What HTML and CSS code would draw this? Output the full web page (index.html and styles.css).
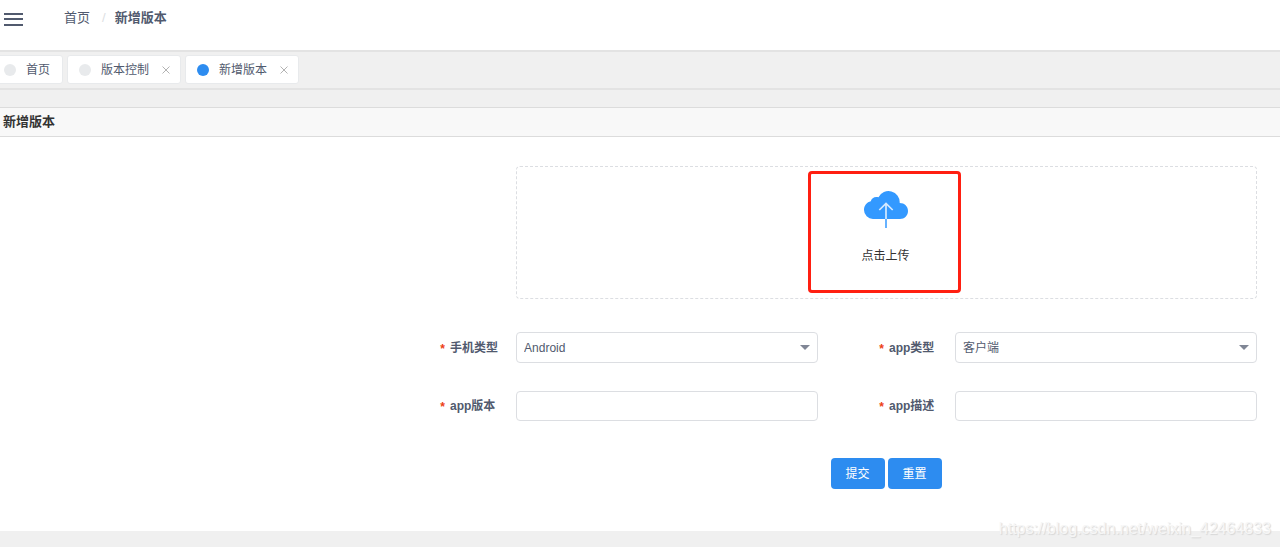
FILE: index.html
```html
<!DOCTYPE html>
<html lang="zh-CN">
<head>
<meta charset="utf-8">
<title>新增版本</title>
<link rel="stylesheet" href="styles.css">
</head>
<body>
<header class="topbar">
  <button class="menu-toggle" type="button" aria-label="菜单">
    <svg width="19" height="13" viewBox="0 0 19 13" shape-rendering="crispEdges"><path d="M0 0h19v2H0zM0 5h19v2H0zM0 11h19v2H0z" fill="#515a6e"/></svg>
  </button>
  <nav class="breadcrumb">
    <a href="#">首页</a><span class="slash">/</span><span class="current">新增版本</span>
  </nav>
</header>
<nav class="tabs">
  <div class="tab tab-home"><span class="dot"></span><a href="#">首页</a></div>
  <div class="tab"><span class="dot"></span><a href="#">版本控制</a><button class="close" type="button" aria-label="关闭版本控制"><svg width="8" height="8" viewBox="0 0 8 8"><path d="M.5.5l7 7M7.5.5l-7 7" stroke="#b3b3b3"/></svg></button></div>
  <div class="tab"><span class="dot dot-active"></span><a href="#">新增版本</a><button class="close" type="button" aria-label="关闭新增版本"><svg width="8" height="8" viewBox="0 0 8 8"><path d="M.5.5l7 7M7.5.5l-7 7" stroke="#b3b3b3"/></svg></button></div>
</nav>
<main class="panel">
  <h1 class="panel-title">新增版本</h1>
  <form class="form">
    <div class="upload">
      <button class="upload-button" type="button">
        <svg width="44" height="38" viewBox="0 0 44 38">
          <path d="M9 28a9 9 0 0 1-9-9C0 14.500 3 11 6.800 10.300 7.500 7 11 5 14.500 6.300A11.200 11.200 0 0 1 35.700 12C40.500 12 44 15.500 44 20c0 4.700-3.500 8-8 8z" fill="#3399ff"/>
          <path d="M22 12.500V28M15.300 19l6.700-6.500 6.700 6.500" fill="none" stroke="#d5eaff" stroke-width="1.700"/>
          <path d="M22 28v9" stroke="#66b2ff" stroke-width="2"/>
        </svg>
        <span>点击上传</span>
      </button>
      <div class="highlight"></div>
    </div>
    <div class="field"><label for="phone"><i>*</i>手机类型</label><div class="select-wrap"><select id="phone" required><option>Android</option></select></div></div>
    <div class="field"><label for="kind"><i>*</i>app类型</label><div class="select-wrap"><select id="kind" required><option>客户端</option></select></div></div>
    <div class="field"><label for="version"><i>*</i>app版本</label><input id="version" type="text" required></div>
    <div class="field"><label for="description"><i>*</i>app描述</label><input id="description" type="text" required></div>
    <div class="actions"><button type="submit">提交</button><button type="reset">重置</button></div>
  </form>
</main>
<div class="watermark">https://blog.csdn.net/weixin_42464833</div>
</body>
</html>
```
FILE: styles.css
```css
* { box-sizing: border-box; }
body {
  margin: 0;
  min-height: 100vh;
  position: relative;
  background: #f0f0f0;
  color: #515a6e;
  font: 12px/18px "Liberation Sans", "Noto Sans CJK SC", sans-serif;
}
button, input, select { font: inherit; }
button { border: 0; padding: 0; background: none; cursor: pointer; }
a { color: inherit; text-decoration: none; }
svg { display: block; }

.topbar {
  display: flex;
  align-items: flex-start;
  gap: 41px;
  height: 52px;
  padding: 9px 4px;
  background: #fff;
  border-bottom: 2px solid #e3e3e3;
}
.menu-toggle { padding-top: 4px; }
.breadcrumb { display: flex; font-size: 13px; }
.slash { margin: 0 9px 0 12px; color: #dcdee2; }
.current { font-weight: 700; }

.tabs {
  display: flex;
  gap: 4px;
  padding: 3px 0 4px;
  border-bottom: 2px solid #e3e3e3;
}
.tab {
  display: flex;
  align-items: center;
  height: 29px;
  padding: 0 10px 0 11px;
  background: #fff;
  border: 1px solid #e8eaec;
  border-radius: 3px;
}
.tab-home { margin-left: -8px; padding-right: 12px; }
.dot {
  width: 12px;
  height: 12px;
  margin-right: 10px;
  border-radius: 50%;
  background: #e8eaec;
}
.dot-active { background: #2d8cf0; }
.close { margin-left: 13px; }

.panel { margin-top: 17px; background: #fff; }
.panel-title {
  margin: 0;
  padding: 5px 3px 6px;
  border: solid #dcdcdc;
  border-width: 1px 0;
  background: #f8f8f8;
  color: #333;
  font-size: 13px;
  line-height: 17px;
}
.form {
  display: grid;
  grid-template-columns: 1fr 1fr;
  column-gap: 60px;
  row-gap: 28px;
  padding: 29px 23px 42px 34.3%;
}
.upload {
  position: relative;
  grid-column: 1 / -1;
  display: flex;
  justify-content: center;
  margin: 0 0 5px 77px;
  padding: 24px 2px 33px 0;
  border: 1px dashed #dcdee2;
  border-radius: 4px;
}
.upload-button {
  display: flex;
  flex-direction: column;
  align-items: center;
  gap: 18px;
  color: #333;
}
.highlight {
  position: absolute;
  top: 4px;
  left: calc(50% - 79px);
  width: 153px;
  height: 122px;
  border: 3px solid #ff1f11;
  border-radius: 4px;
  pointer-events: none;
}
.field { display: flex; align-items: center; }
.field label { flex: 0 0 77px; font-weight: 700; }
.field i {
  display: inline-block;
  width: 11px;
  color: #ed4014;
  font: 700 12px/12px "Liberation Mono", monospace;
  vertical-align: -1px;
}
.select-wrap { position: relative; flex: 1; }
.select-wrap::after {
  content: "";
  position: absolute;
  top: 13px;
  right: 8px;
  border: solid transparent;
  border-width: 5px 5px 0;
  border-top-color: #808695;
  pointer-events: none;
}
.field input, .field select {
  display: block;
  flex: 1;
  width: 100%;
  min-width: 0;
  height: 31px;
  padding: 0 7px;
  border: 1px solid #dcdee2;
  border-radius: 4px;
  background: #fff;
  color: #515a6e;
  appearance: none;
}
.field input { height: 30px; }
.actions {
  grid-column: 1 / -1;
  display: flex;
  justify-content: center;
  gap: 3px;
  margin: 9px 0 0 76px;
}
.actions button {
  height: 31px;
  padding: 0 15px;
  border-radius: 4px;
  background: #2d8cf0;
  color: #fff;
}
.watermark {
  position: absolute;
  right: 9px;
  bottom: 8px;
  color: #f6f6f6;
  font-size: 16px;
  line-height: 20px;
  text-shadow: 1px 1px 1px #d6d6d6;
}
```
